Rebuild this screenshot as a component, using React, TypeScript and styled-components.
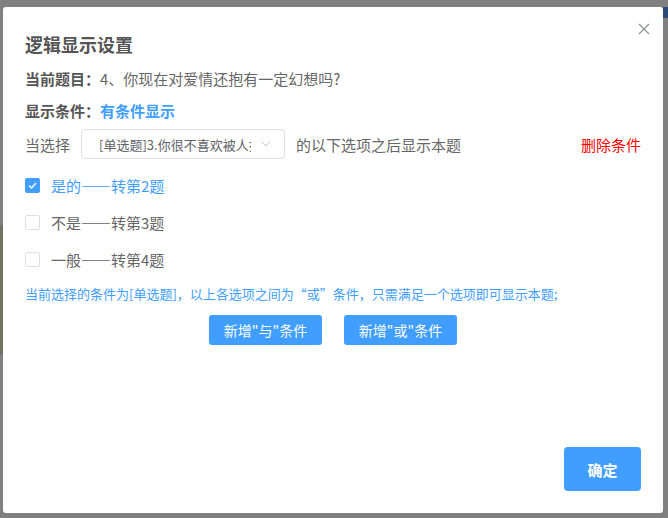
import styled, { createGlobalStyle } from "styled-components";

const GlobalStyle = createGlobalStyle`
  html, body {
    margin: 0;
    padding: 0;
  }
  body {
    width: 668px;
    height: 518px;
    overflow: hidden;
    background: #808080;
    font-family: "Noto Sans CJK SC", "Noto Sans", sans-serif;
  }
`;

const Backdrop = styled.div`
  display: flex;
  height: 518px;
`;

const Edge = styled.div<{ $width: number }>`
  width: ${({ $width }) => $width}px;
  display: flex;
  flex-direction: column;
`;

const EdgeBand = styled.div<{ $top: number; $height: number; $color: string }>`
  margin-top: ${({ $top }) => $top}px;
  height: ${({ $height }) => $height}px;
  background: ${({ $color }) => $color};
`;

const Dialog = styled.div`
  position: relative;
  width: 660px;
  height: 506px;
  margin-top: 7px;
  box-sizing: border-box;
  padding: 25px 22px 22px 22px;
  background: #fff;
  border-radius: 3px;
  display: flex;
  flex-direction: column;
`;

const CloseButton = styled.button`
  position: absolute;
  top: 15px;
  right: 13px;
  width: 13px;
  height: 13px;
  padding: 0;
  border: none;
  background: none;
  display: flex;
  align-items: center;
  justify-content: center;
  cursor: pointer;
`;

const Title = styled.h2`
  margin: 0;
  font-size: 18px;
  line-height: 24px;
  font-weight: bold;
  color: #555;
`;

const InfoLine = styled.div<{ $gap: number }>`
  margin-top: ${({ $gap }) => $gap}px;
  font-size: 15px;
  line-height: 22px;
  color: #666;
`;

const Label = styled.span`
  font-weight: bold;
  color: #555;
`;

const Highlight = styled.span`
  font-weight: bold;
  color: #409eff;
`;

const ConditionRow = styled.div`
  margin-top: 7px;
  height: 30px;
  display: flex;
  align-items: center;
  font-size: 15px;
  color: #666;
`;

const SelectBox = styled.div`
  width: 204px;
  height: 30px;
  margin: 0 11px;
  box-sizing: border-box;
  padding: 0 13px 0 17px;
  border: 1px solid #dcdfe6;
  border-radius: 4px;
  display: flex;
  align-items: center;
  gap: 10px;
`;

const SelectText = styled.span`
  flex: 1;
  overflow: hidden;
  white-space: nowrap;
  font-size: 13px;
  color: #606266;
`;

const DeleteLink = styled.span`
  margin-left: auto;
  color: #f00;
  cursor: pointer;
`;

const OptionList = styled.div`
  margin-top: 15px;
  display: flex;
  flex-direction: column;
  gap: 15px;
`;

const OptionRow = styled.label<{ $checked?: boolean }>`
  height: 22px;
  display: flex;
  align-items: center;
  gap: 11px;
  font-size: 15px;
  color: ${({ $checked }) => ($checked ? "#409eff" : "#666")};
`;

const Dash = styled.span`
  font-variant-east-asian: full-width;
`;

const CheckBox = styled.span<{ $checked?: boolean }>`
  width: 15px;
  height: 15px;
  box-sizing: border-box;
  border: 1px solid ${({ $checked }) => ($checked ? "#409eff" : "#dcdfe6")};
  border-radius: 2px;
  background: ${({ $checked }) => ($checked ? "#409eff" : "#fff")};
  display: flex;
  align-items: center;
  justify-content: center;
`;

const Hint = styled.div`
  margin-top: 14px;
  font-size: 13px;
  line-height: 20px;
  color: #409eff;
`;

const ButtonRow = styled.div`
  margin-top: 11px;
  display: flex;
  justify-content: center;
  gap: 22px;
`;

const AddButton = styled.button`
  width: 113px;
  height: 30px;
  padding: 0;
  border: none;
  border-radius: 3px;
  background: #409eff;
  color: #fff;
  font-family: inherit;
  font-size: 14px;
  cursor: pointer;
`;

const Footer = styled.div`
  margin-top: auto;
  display: flex;
  justify-content: flex-end;
`;

const ConfirmButton = styled.button`
  width: 77px;
  height: 44px;
  padding: 0;
  border: none;
  border-radius: 4px;
  background: #409eff;
  color: #fff;
  font-family: inherit;
  font-size: 15px;
  font-weight: bold;
  cursor: pointer;
`;

const options = [
  { answer: "是的", jump: "转第2题", checked: true },
  { answer: "不是", jump: "转第3题", checked: false },
  { answer: "一般", jump: "转第4题", checked: false },
];

export default function App() {
  return (
    <>
      <GlobalStyle />
      <Backdrop>
        <Edge $width={3}>
          <EdgeBand $top={225} $height={130} $color="#6d7663" />
        </Edge>
        <Dialog>
          <CloseButton title="关闭">
            <svg width="12" height="12" viewBox="0 0 12 12">
              <path d="M1 1 L11 11 M11 1 L1 11" stroke="#909399" strokeWidth="1.2" />
            </svg>
          </CloseButton>
          <Title>逻辑显示设置</Title>
          <InfoLine $gap={12}>
            <Label>当前题目：</Label>4、你现在对爱情还抱有一定幻想吗?
          </InfoLine>
          <InfoLine $gap={10}>
            <Label>显示条件：</Label>
            <Highlight>有条件显示</Highlight>
          </InfoLine>
          <ConditionRow>
            当选择
            <SelectBox>
              <SelectText>[单选题]3.你很不喜欢被人打扰吗?</SelectText>
              <svg width="10" height="6" viewBox="0 0 10 6">
                <path d="M0.5 0.5 L5 5 L9.5 0.5" fill="none" stroke="#c0c4cc" strokeWidth="1" />
              </svg>
            </SelectBox>
            的以下选项之后显示本题
            <DeleteLink>删除条件</DeleteLink>
          </ConditionRow>
          <OptionList>
            {options.map((o) => (
              <OptionRow key={o.answer} $checked={o.checked}>
                <CheckBox $checked={o.checked}>
                  {o.checked && (
                    <svg width="9" height="7" viewBox="0 0 9 7">
                      <path d="M1 3.5 L3.5 6 L8 1" fill="none" stroke="#fff" strokeWidth="1.3" />
                    </svg>
                  )}
                </CheckBox>
                <span>
                  {o.answer}
                  <Dash>——</Dash>
                  {o.jump}
                </span>
              </OptionRow>
            ))}
          </OptionList>
          <Hint>当前选择的条件为[单选题]，以上各选项之间为“或”条件，只需满足一个选项即可显示本题;</Hint>
          <ButtonRow>
            <AddButton>新增"与"条件</AddButton>
            <AddButton>新增"或"条件</AddButton>
          </ButtonRow>
          <Footer>
            <ConfirmButton>确定</ConfirmButton>
          </Footer>
        </Dialog>
        <Edge $width={5}>
          <EdgeBand $top={7} $height={11} $color="#2e4a78" />
        </Edge>
      </Backdrop>
    </>
  );
}
